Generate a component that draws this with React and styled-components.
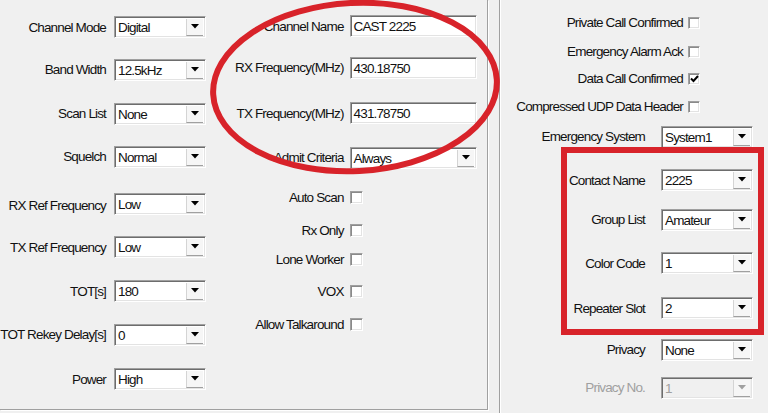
import React from 'react';
import styled, { createGlobalStyle } from 'styled-components';

const GlobalStyle = createGlobalStyle`
  html, body { margin: 0; padding: 0; background: #f0f0f0; }
  * { box-sizing: border-box; }
`;

const RED = '#d8232a';

const Page = styled.div`
  position: relative;
  display: flex;
  width: 768px;
  height: 413px;
  overflow: hidden;
  background: #f0f0f0;
  font-family: 'Liberation Sans', Arial, sans-serif;
  font-size: 13.5px;
  letter-spacing: -0.85px;
  color: #111;
`;

const LeftPanel = styled.div`
  display: flex;
  width: 488px;
  height: 410px;
  flex-shrink: 0;
  border-right: 1px solid #a0a0a0;
  border-bottom: 1px solid #a0a0a0;
  box-shadow: 1px 1px 0 #fff;
`;

const RightPanel = styled.div`
  display: flex;
  flex-direction: column;
  flex: 1;
  margin-left: 11px;
  border-left: 1px solid #a0a0a0;
  box-shadow: inset 1px 0 0 #fff;
  padding-top: 17px;
`;

const Column = styled.div`
  display: flex;
  flex-direction: column;
  width: ${(p) => p.$w}px;
  padding-top: ${(p) => p.$pt}px;
`;

const Row = styled.div`
  display: flex;
  align-items: center;
  height: ${(p) => p.$h || 22}px;
  margin-top: ${(p) => p.$mt || 0}px;
  gap: ${(p) => p.$gap}px;
`;

const Label = styled.div`
  display: flex;
  justify-content: flex-end;
  flex-shrink: 0;
  width: ${(p) => p.$w}px;
  white-space: nowrap;
  line-height: 16px;
  margin-top: ${(p) => (p.$dy || 0) * 2}px;
  color: ${(p) => (p.$disabled ? '#a0a0a0' : '#111')};
`;

const Sunken = styled.div`
  display: flex;
  align-items: center;
  width: ${(p) => p.$w}px;
  height: 22px;
  flex-shrink: 0;
  background: ${(p) => (p.$disabled ? '#f0f0f0' : '#fff')};
  border-top: 1px solid #a0a0a0;
  border-left: 1px solid #a0a0a0;
  border-bottom: 1px solid #fff;
  border-right: 1px solid #fff;
  box-shadow: inset 1px 1px 0 #6d6d6d, inset -1px -1px 0 #e3e3e3;
`;

const Value = styled.span`
  flex: 1;
  padding-left: 3px;
  white-space: nowrap;
  overflow: hidden;
  color: ${(p) => (p.$disabled ? '#a0a0a0' : '#111')};
`;

const DropButton = styled.div`
  display: flex;
  align-items: center;
  justify-content: center;
  width: 17px;
  height: 17px;
  margin-right: 2px;
  background: #f6f6f6;
  border-left: 1px solid #d4d4d4;
  border-bottom: 1px solid #a0a0a0;
`;

const Check = styled.div`
  display: flex;
  align-items: center;
  justify-content: center;
  width: ${(p) => p.$size || 13}px;
  height: ${(p) => p.$size || 13}px;
  flex-shrink: 0;
  background: #fff;
  border-top: 1px solid #a0a0a0;
  border-left: 1px solid #a0a0a0;
  border-bottom: 1px solid #fff;
  border-right: 1px solid #fff;
  box-shadow: inset 1px 1px 0 #8a8a8a, inset -1px -1px 0 #e3e3e3;
`;

const Annotation = styled.svg`
  position: absolute;
  left: 0;
  top: 0;
  pointer-events: none;
`;

const RedBox = styled.div`
  position: absolute;
  left: 561px;
  top: 147px;
  width: 203px;
  height: 188px;
  border: 6px solid ${RED};
  pointer-events: none;
`;

function Combo({ value, w, disabled }) {
  return (
    <Sunken $w={w} $disabled={disabled}>
      <Value $disabled={disabled}>{value}</Value>
      <DropButton>
        <svg width="8" height="5" viewBox="0 0 8 5">
          <polygon points="0,0 8,0 4,4.5" fill={disabled ? '#a0a0a0' : '#000'} />
        </svg>
      </DropButton>
    </Sunken>
  );
}

function TextBox({ value, w }) {
  return (
    <Sunken $w={w}>
      <Value>{value}</Value>
    </Sunken>
  );
}

function CheckBox({ checked, size }) {
  return (
    <Check $size={size}>
      {checked && (
        <svg width="9" height="8" viewBox="0 0 9 8">
          <path d="M1 3.5 L3.5 6 L8 1" stroke="#000" strokeWidth="2" fill="none" />
        </svg>
      )}
    </Check>
  );
}

const leftFields = [
  { label: 'Channel Mode', value: 'Digital', mt: 0, dy: 1 },
  { label: 'Band Width', value: '12.5kHz', mt: 21 },
  { label: 'Scan List', value: 'None', mt: 22 },
  { label: 'Squelch', value: 'Normal', mt: 21 },
  { label: 'RX Ref Frequency', value: 'Low', mt: 25, dy: 2 },
  { label: 'TX Ref Frequency', value: 'Low', mt: 21, dy: 1 },
  { label: 'TOT[s]', value: '180', mt: 22, dy: 1 },
  { label: 'TOT Rekey Delay[s]', value: '0', mt: 22 },
  { label: 'Power', value: 'High', mt: 22, dy: 1 },
];

const midChecks = [
  { label: 'Auto Scan', mt: 22 },
  { label: 'Rx Only', mt: 20 },
  { label: 'Lone Worker', mt: 16 },
  { label: 'VOX', mt: 19 },
  { label: 'Allow Talkaround', mt: 20 },
];

const rightChecks = [
  { label: 'Private Call Confirmed', mt: 0 },
  { label: 'Emergency Alarm Ack', mt: 17 },
  { label: 'Data Call Confirmed', mt: 15, checked: true },
  { label: 'Compressed UDP Data Header', mt: 16 },
];

const rightCombos = [
  { label: 'Emergency System', value: 'System1', mt: 13 },
  { label: 'Contact Name', value: '2225', mt: 21, dy: 1 },
  { label: 'Group List', value: 'Amateur', mt: 18 },
  { label: 'Color Code', value: '1', mt: 21, dy: 1 },
  { label: 'Repeater Slot', value: '2', mt: 23, dy: 1 },
  { label: 'Privacy', value: 'None', mt: 20 },
  { label: 'Privacy No.', value: '1', mt: 16, disabled: true },
];

export default function App() {
  return (
    <Page>
      <GlobalStyle />
      <LeftPanel>
        <Column $w={212} $pt={16}>
          {leftFields.map((f) => (
            <Row key={f.label} $mt={f.mt} $gap={8}>
              <Label $w={106} $dy={f.dy}>{f.label}</Label>
              <Combo value={f.value} w={92} />
            </Row>
          ))}
        </Column>
        <Column $w={276} $pt={15}>
          <Row $gap={6}>
            <Label $w={132} $dy={1}>Channel Name</Label>
            <TextBox value="CAST 2225" w={127} />
          </Row>
          <Row $mt={20} $gap={6}>
            <Label $w={132}>RX Frequency(MHz)</Label>
            <TextBox value="430.18750" w={127} />
          </Row>
          <Row $mt={23} $gap={6}>
            <Label $w={132} $dy={1}>TX Frequency(MHz)</Label>
            <TextBox value="431.78750" w={127} />
          </Row>
          <Row $mt={23} $gap={6}>
            <Label $w={132}>Admit Criteria</Label>
            <Combo value="Always" w={127} />
          </Row>
          {midChecks.map((c) => (
            <Row key={c.label} $h={13} $mt={c.mt} $gap={6}>
              <Label $w={132}>{c.label}</Label>
              <CheckBox />
            </Row>
          ))}
        </Column>
      </LeftPanel>

      <RightPanel>
        {rightChecks.map((c) => (
          <Row key={c.label} $h={12} $mt={c.mt} $gap={5}>
            <Label $w={183}>{c.label}</Label>
            <CheckBox size={12} checked={c.checked} />
          </Row>
        ))}
        {rightCombos.map((f) => (
          <Row key={f.label} $mt={f.mt} $gap={16}>
            <Label $w={145} $dy={f.dy} $disabled={f.disabled}>{f.label}</Label>
            <Combo value={f.value} w={92} disabled={f.disabled} />
          </Row>
        ))}
      </RightPanel>

      <Annotation width="768" height="413" viewBox="0 0 768 413">
        <ellipse
          cx="355"
          cy="87"
          rx="142"
          ry="84"
          fill="none"
          stroke={RED}
          strokeWidth="6"
          transform="rotate(-3 355 87)"
        />
      </Annotation>
      <RedBox />
    </Page>
  );
}
